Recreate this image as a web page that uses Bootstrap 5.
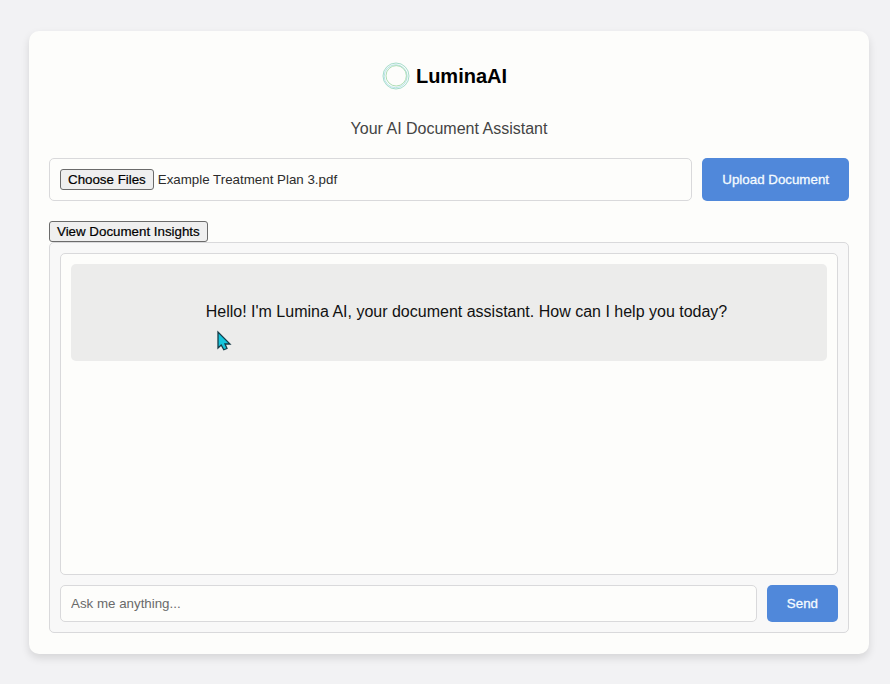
<!DOCTYPE html>
<html lang="en">
<head>
<meta charset="utf-8">
<meta name="viewport" content="width=device-width, initial-scale=1">
<title>LuminaAI</title>
<link href="https://cdn.jsdelivr.net/npm/bootstrap@5.3.0/dist/css/bootstrap.min.css" rel="stylesheet">
<style>
body{min-height:100vh;background:#f2f2f4;font-family:"Liberation Sans",Arial,sans-serif;font-size:13.333px;line-height:15px;color:#2c2c2c;padding:31px 0 0 29px;overflow:hidden}
.app-shell{width:840px;height:623px;padding:31px 20px 20px;background:#fdfdfb;border-radius:10px;box-shadow:0 4px 8px rgba(0,0,0,.12)}
.brand{height:28px;gap:6px;padding-right:9px}
.brand h1{font-size:20px;line-height:28px;color:#000}
.tagline{font-size:16px;line-height:18px;margin-top:30px;color:#444}
.upload-row{height:43px;margin-top:20px;gap:10px}
.field{background:#fdfdfb;border:1px solid #d9d9db;border-radius:5px;padding:0 10px}
.native-btn{background:#efefef;border:1px solid #6b6b6b;border-radius:3px;padding:0 7px;height:21px;line-height:19px;font-size:13.333px;color:#000;-webkit-text-stroke:.2px}
.action{background:#5088da;color:#f4fbff;border:0;border-radius:5px;font-size:13.333px;line-height:15px;padding:0 20px;-webkit-text-stroke:.3px}
.action:hover{background:#447bce;color:#fff}
.insights{margin-top:20px}
.chat-panel{height:391px;border:1px solid #d9d9db;border-radius:5px;background:#f8f8f8;padding:10px;gap:10px}
.chat-log{background:#fdfdfb;border:1px solid #d9d9db;border-radius:5px;padding:10px}
.message{height:97px;background:#ececeb;border-radius:5px;padding:0 0 2px 35px;font-size:16px;line-height:24px;color:#111}
.composer{height:37px;gap:10px}
.prompt-input{min-width:0;color:#333;outline:0}
.prompt-input::placeholder{color:#6a6a6a;opacity:1}
.pointer{left:216px;top:330px}
</style>
<script defer src="https://cdn.jsdelivr.net/npm/bootstrap@5.3.0/dist/js/bootstrap.bundle.min.js"></script>
</head>
<body>
<main class="app-shell d-flex flex-column">
  <header class="brand d-flex align-items-center justify-content-center">
    <svg width="28" height="28" viewBox="0 0 28 28" fill="none" stroke-width=".9"><circle cx="14" cy="14" r="13" stroke="#9bd8c4"/><circle cx="13.7" cy="14.2" r="11.5" stroke="#afdfe6"/><circle cx="14.2" cy="13.8" r="10.2" stroke="#a5d9ac"/></svg>
    <h1 class="fw-bold m-0">LuminaAI</h1>
  </header>
  <p class="tagline text-center mb-0">Your AI Document Assistant</p>
  <div class="upload-row d-flex">
    <div class="field flex-grow-1 d-flex align-items-center gap-1">
      <button class="native-btn" type="button">Choose Files</button><span>Example Treatment Plan 3.pdf</span>
    </div>
    <button class="btn action" type="button">Upload Document</button>
  </div>
  <button class="native-btn insights align-self-start" type="button">View Document Insights</button>
  <section class="chat-panel d-flex flex-column">
    <div class="chat-log flex-grow-1">
      <div class="message d-flex align-items-center justify-content-center">Hello! I'm Lumina AI, your document assistant. How can I help you today?</div>
    </div>
    <form class="composer d-flex">
      <input class="field prompt-input flex-grow-1" type="text" placeholder="Ask me anything..." aria-label="Message">
      <button class="btn action" type="button">Send</button>
    </form>
  </section>
</main>
<svg class="pointer position-absolute" width="16" height="22" viewBox="0 0 16 22"><path d="M2 2V18L5.2 15L7.8 19.8L11 18.5L9 14H14Z" fill="#16c5dc" stroke="#163c48" stroke-width="1.3"/></svg>
</body>
</html>
